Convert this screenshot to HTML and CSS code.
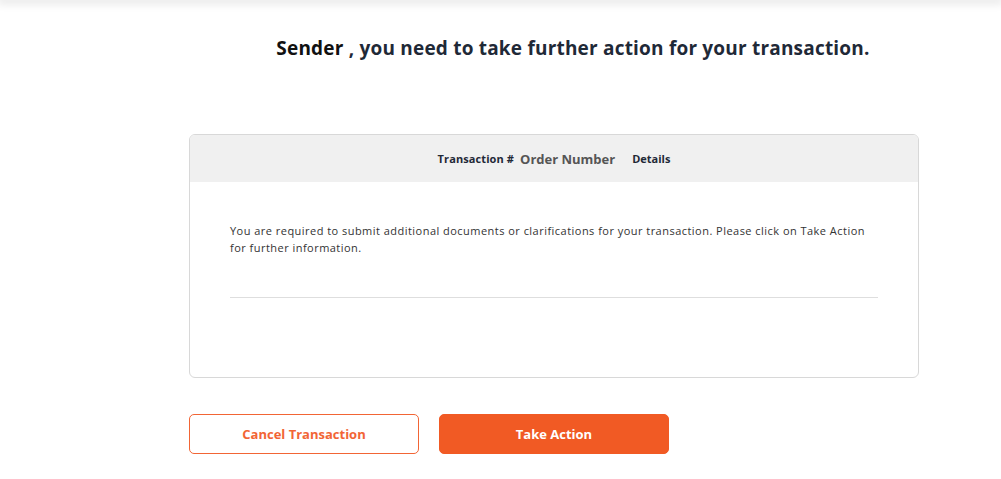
FILE: index.html
```html
<!DOCTYPE html>
<html>
<head>
<meta charset="utf-8">
<link rel="stylesheet" href="styles.css">
</head>
<body>
<div class="topbar"></div>
<main class="main">
  <h1 class="title"><span class="name">Sender</span> , you need to take further action for your transaction.</h1>
  <section class="card">
    <div class="card-head">
      <span class="label">Transaction #</span>
      <span class="order">Order Number</span>
      <span class="details">Details</span>
    </div>
    <div class="card-body">
      <p class="msg">You are required to submit additional documents or clarifications for your transaction. Please click on Take Action for further information.</p>
      <hr class="divider">
    </div>
  </section>
  <div class="actions">
    <button class="btn btn-outline">Cancel Transaction</button>
    <button class="btn btn-fill">Take Action</button>
  </div>
</main>
</body>
</html>
```
FILE: styles.css
```css
html, body {
  margin: 0;
  padding: 0;
  background: #fff;
}
body {
  font-family: "Open Sans", "Lato", sans-serif;
  color: #333;
}
.topbar {
  height: 0;
  box-shadow: 0 0 10px 3px rgba(0,0,0,0.13);
}
.main {
  margin-left: 189px;
  width: 730px;
  padding-top: 35px;
}
.title {
  margin: 0 0 73px 0;
  width: 768px;
  text-align: center;
  font-size: 19px;
  line-height: 26px;
  font-weight: 700;
  letter-spacing: 0.2px;
  color: #1f2937;
}
.name {
  color: #111;
}
.card {
  border: 1px solid #d8d8d8;
  border-radius: 6px;
  overflow: hidden;
}
.card-head {
  height: 47px;
  background: #f0f0f0;
  display: flex;
  align-items: center;
  justify-content: center;
  gap: 6px;
}
.label {
  font-size: 11px;
  font-weight: 700;
  letter-spacing: 0.1px;
  color: #1f2937;
}
.order {
  font-size: 13px;
  font-weight: 700;
  color: #555;
  margin-right: 11px;
}
.details {
  font-size: 11px;
  font-weight: 700;
  color: #1f2937;
}
.card-body {
  padding: 40px 40px 79px 40px;
}
.msg {
  margin: 0;
  font-size: 11px;
  line-height: 17px;
  letter-spacing: 0.47px;
  color: #333;
}
.divider {
  margin: 41px 0 0 0;
  border: 0;
  border-top: 1px solid #dedede;
}
.actions {
  display: flex;
  gap: 20px;
  margin-top: 36px;
}
.btn {
  width: 230px;
  height: 40px;
  border-radius: 5px;
  font-family: inherit;
  font-size: 13px;
  font-weight: 700;
  cursor: pointer;
}
.btn-outline {
  background: #fff;
  border: 1px solid #f26535;
  color: #f26535;
}
.btn-fill {
  background: #f15a24;
  border: 1px solid #f15a24;
  color: #fff;
}
```
